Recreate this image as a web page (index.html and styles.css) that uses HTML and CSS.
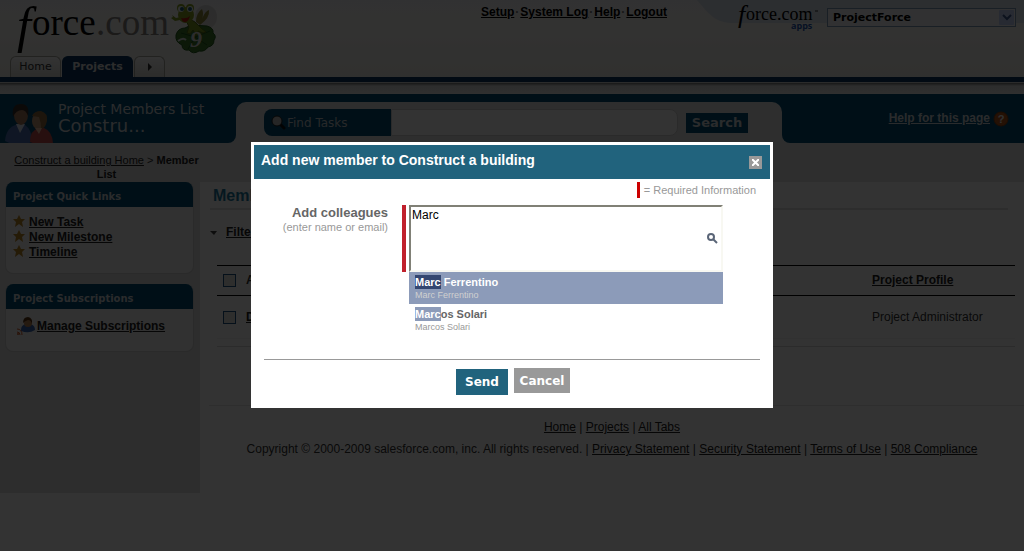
FILE: index.html
```html
<!DOCTYPE html>
<html lang="en">
<head>
<meta charset="utf-8">
<title>Project Members List</title>
<link rel="stylesheet" href="styles.css">
</head>
<body>
<header class="top">
  <div class="top-row">
    <svg class="logo" width="224" height="56" viewBox="0 0 224 56" role="img" aria-label="force.com">
      <text class="logo-f" x="17" y="42">f</text>
      <text class="logo-word" x="32" y="35">orce</text>
      <text class="logo-com" x="96" y="35">.com</text>
      <ellipse cx="206" cy="17" rx="11" ry="12" fill="#c4c4c4" opacity=".5"/>
      <path d="M176 35q2-7 9-7l6-3 16 1q7 2 6 7 4 3 1 7 0 6-6 7-3 5-9 4-6 4-10-1-7 1-7-5-7-3-6-10z" fill="#3c7a2c" stroke="#20561a"/>
      <path d="M195 37l-14-4M195 37l15-6M195 37l-7 12M195 37l12 8" stroke="#20561a" fill="none"/>
      <path d="M196 22q0-9 6-13 2 5 0 10 3-8 7-9 1 8-9 15z" fill="#8a8638"/>
      <path d="M186 20q7-1 11 4l4 4 5 4-3 1-5-2 1 5-3-1-3-5-3 4-3-1 2-6z" fill="#7f9a22" stroke="#4f6a12"/>
      <path d="M180 20l-5 1-4-3 2-1-1-2 4 3 5-1z" fill="#7f9a22"/>
      <ellipse cx="186" cy="15" rx="8" ry="8" fill="#86a022"/>
      <circle cx="181" cy="8" r="4" fill="#86a022"/><circle cx="190" cy="8" r="4" fill="#86a022"/>
      <path d="M181 18q6 1 9-2-2 7-6 6-2-1-3-4z" fill="#b82010"/>
      <circle cx="181" cy="9" r="3" fill="#e8f0f0"/><circle cx="190" cy="9" r="3" fill="#e8f0f0"/>
      <circle cx="182" cy="9" r="2" fill="#205d78"/><circle cx="190" cy="9" r="2" fill="#205d78"/>
      <text class="logo-nine" x="190" y="47">9</text>
      <path d="M178 41q5-4 8-1" stroke="#ddd" stroke-width="2" fill="none"/>
    </svg>
    <nav class="user-nav"><a href="#">Setup</a><i>·</i><a href="#">System Log</a><i>·</i><a href="#">Help</a><i>·</i><a href="#">Logout</a></nav>
    <div class="apps">
      <svg class="swoosh" height="24" width="327" viewBox="0 0 327 24" preserveAspectRatio="none" aria-hidden="true">
        <path d="M0 0C13 15 18 23 38 23H327V0z" fill="#dce4ee"/>
      </svg>
      <svg class="apps-logo" width="86" height="33" viewBox="0 0 86 33" role="img" aria-label="force.com apps">
        <text class="apps-f" x="5" y="23">f</text>
        <text class="apps-word" x="13" y="20">orce.com</text>
        <text class="apps-sub" x="58" y="29">apps</text>
        <path d="M82 11h3" stroke="#333"/>
      </svg>
      <span class="app-picker">
        <select aria-label="Application"><option>ProjectForce</option></select>
        <svg class="chevron" width="15" height="15" viewBox="0 0 15 15" aria-hidden="true"><rect width="15" height="15" rx="1" fill="#c2d2fb"/><path d="M4 5l4 4 4-4" fill="none" stroke="#3d5a90" stroke-width="2"/></svg>
      </span>
    </div>
  </div>
  <nav class="tabs">
    <a href="#" class="tab">Home</a>
    <a href="#" class="tab tab-on">Projects</a>
    <a href="#" class="tab tab-more" aria-label="More tabs"><svg width="6" height="8" viewBox="0 0 6 8"><path d="M1 0l4 4-4 4z" fill="#333"/></svg></a>
  </nav>
</header>
<div class="rule"></div>

<section class="band">
  <div class="band-title">
    <svg width="50" height="44" viewBox="0 0 50 44" aria-hidden="true">
      <path d="M0 38q1-14 13-17l7 1q6 4 8 16-13 8-28 0z" fill="#4a6fb5"/>
      <path d="M11 21l4 9 5-9z" fill="#dbe5f5"/>
      <ellipse cx="16" cy="12" rx="7" ry="10" fill="#a3785a"/>
      <path d="M8 14Q6 1 16 1q9 0 7 12-2-6-6-6-6 0-9 7z" fill="#3a302a"/>
      <path d="M25 39q0-12 9-14h5q8 3 9 15-12 5-23-1z" fill="#c04a4a"/>
      <ellipse cx="33" cy="18" rx="6" ry="8" fill="#c49a78"/>
      <path d="M27 13q2-5 9-5 7 2 6 10-2 8-6 8 0-7-2-12z" fill="#8f6c3c"/>
      <path d="M30 25l4 6 3-6z" fill="#eebfa2"/>
    </svg>
    <h1><span>Project Members List</span>Constru...</h1>
  </div>
  <div class="band-search">
    <form class="search">
      <label for="find"><svg width="15" height="15" viewBox="0 0 15 15" aria-hidden="true"><path d="M9 9l4 4" stroke="#101010" stroke-width="3" stroke-linecap="round"/><circle cx="6" cy="6" r="5" fill="#bfbfbf" stroke="#222"/></svg>Find Tasks</label>
      <input id="find" type="text">
      <button type="button">Search</button>
    </form>
  </div>
  <div class="band-help">
    <a href="#">Help for this page</a>
    <svg width="16" height="16" viewBox="0 0 16 16" aria-hidden="true"><circle cx="8" cy="8" r="7" fill="#b5541c" stroke="#8a3d10"/><text class="q" x="8" y="12">?</text></svg>
  </div>
</section>

<div class="columns">
  <aside class="side">
    <p class="crumbs"><a href="#">Construct a building Home</a> &gt; <b>Member List</b></p>
    <section class="box">
      <h2>Project Quick Links</h2>
      <ul class="quick">
        <li><svg width="12" height="12" viewBox="0 0 12 12" aria-hidden="true"><path d="M6 0l2 4 4 0-3 3 1 5-4-3-4 3 1-5-3-3h4z" fill="#b98524"/></svg><a href="#">New Task</a></li>
        <li><svg width="12" height="12" viewBox="0 0 12 12" aria-hidden="true"><path d="M6 0l2 4 4 0-3 3 1 5-4-3-4 3 1-5-3-3h4z" fill="#b98524"/></svg><a href="#">New Milestone</a></li>
        <li><svg width="12" height="12" viewBox="0 0 12 12" aria-hidden="true"><path d="M6 0l2 4 4 0-3 3 1 5-4-3-4 3 1-5-3-3h4z" fill="#b98524"/></svg><a href="#">Timeline</a></li>
      </ul>
    </section>
    <section class="box">
      <h2>Project Subscriptions</h2>
      <p class="subs"><svg width="19" height="19" viewBox="0 0 19 19" aria-hidden="true"><path d="M5 13q0-5 5-6h4q5 1 5 6-6 4-14 1z" fill="#3966b0"/><circle cx="12" cy="6" r="4" fill="#b98052"/><path d="M7 6q0-6 5-6 5 1 4 7-1-4-4-4-3 1-5 3z" fill="#5c3511"/><path d="M1 12q5 0 5 6M1 15q3 0 3 3" stroke="#cf5b2b" fill="none"/><circle cx="2" cy="17" r="1" fill="#cf5b2b"/></svg><a href="#">Manage Subscriptions</a></p>
    </section>
  </aside>
  <main class="main">
    <div class="panel">
      <h2 class="heading">Members</h2>
      <p class="filter"><svg width="7" height="4" viewBox="0 0 7 4" aria-hidden="true"><path d="M0 0h7L4 4z" fill="#444"/></svg><a href="#">Filter</a></p>
      <table class="members">
        <thead><tr><th class="c-box"><input type="checkbox" aria-label="Select all"></th><th>Action</th><th class="c-profile"><a href="#">Project Profile</a></th></tr></thead>
        <tbody><tr><td class="c-box"><input type="checkbox" aria-label="Select member"></td><td><a href="#"><b>Del</b></a></td><td>Project Administrator</td></tr></tbody>
      </table>
      <div class="end"></div>
    </div>
    <footer class="foot">
      <p><a href="#">Home</a> | <a href="#">Projects</a> | <a href="#">All Tabs</a></p>
      <p>Copyright © 2000-2009 salesforce.com, inc. All rights reserved. | <a href="#">Privacy Statement</a> | <a href="#">Security Statement</a> | <a href="#">Terms of Use</a> | <a href="#">508 Compliance</a></p>
    </footer>
  </main>
</div>

<div class="shade">
  <div class="dialog" role="dialog" aria-labelledby="dlg-title">
    <div class="dlg-head">
      <h2 id="dlg-title">Add new member to Construct a building</h2>
      <button type="button" class="close" aria-label="Close"><svg width="7" height="7" viewBox="0 0 7 7"><path d="M0 0l7 7M7 0L0 7" stroke="#fff" stroke-width="2"/></svg></button>
    </div>
    <p class="required"><span></span>= Required Information</p>
    <div class="field">
      <label for="colleagues"><b>Add colleagues</b><small>(enter name or email)</small></label>
      <div class="control">
        <div class="entry">
          <textarea id="colleagues">Marc</textarea>
          <svg class="lens" width="11" height="11" viewBox="0 0 11 11" aria-hidden="true"><circle cx="4" cy="4" r="3" fill="#fff" stroke="#5a6577" stroke-width="2"/><path d="M6 6l4 4" stroke="#5a6577" stroke-width="2"/></svg>
        </div>
        <ul class="matches">
          <li class="picked"><b><mark>Marc</mark> Ferrentino</b><small>Marc Ferrentino</small></li>
          <li><b><mark>Marc</mark>os Solari</b><small>Marcos Solari</small></li>
        </ul>
      </div>
    </div>
    <div class="actions">
      <button type="button" class="send">Send</button>
      <button type="button" class="cancel">Cancel</button>
    </div>
  </div>
</div>
</body>
</html>
```

FILE: styles.css
```css
* { box-sizing: border-box; }
body { margin: 0; background: #fff; color: #333; font: 12px/15px "Liberation Sans", Arial, sans-serif; min-height: 100vh; }
h1, h2, p, ul { margin: 0; padding: 0; font-weight: normal; }
ul { list-style: none; }
a { color: #222; }
svg { flex: none; display: block; }
button, input, select, textarea { font: inherit; margin: 0; border-radius: 0; }

.top { background: linear-gradient(#f6f6f8, #f9f8f4 40%, #f1f0ea); }
.top-row { display: flex; align-items: flex-start; height: 56px; }
.logo { overflow: visible; }
.logo text { font-family: "Liberation Serif", serif; }
.logo .logo-f { font-size: 50px; font-style: italic; fill: #000; }
.logo .logo-word { font-size: 37px; fill: #000; }
.logo .logo-com { font-size: 37px; fill: #85827f; }
.logo .logo-nine { font-size: 24px; font-style: italic; font-weight: bold; fill: #ddd; }
.user-nav { margin: 5px 30px 0 auto; display: flex; gap: 1px; font-weight: bold; }
.user-nav a { color: #000; }
.user-nav i { color: #777; font-style: normal; }
.apps { width: 327px; position: relative; display: flex; justify-content: flex-end; gap: 8px; padding-right: 8px; }
.swoosh { position: absolute; left: 0; top: 0; width: 100%; }
.apps-logo { position: relative; }
.apps-logo text { font-family: "Liberation Serif", serif; fill: #000; }
.apps-logo .apps-f { font-size: 26px; font-style: italic; }
.apps-logo .apps-word { font-size: 18px; }
.apps-logo .apps-sub { font: bold 9px "Open Sans", sans-serif; fill: #1e58b5; }
.app-picker { position: relative; width: 189px; height: 19px; margin-top: 8px; }
.app-picker select { appearance: none; width: 100%; height: 19px; padding: 0 5px; border: 1px solid #7f9db9; background: #f4f6f9; color: #000; font: bold 11px/16px "DejaVu Sans", Verdana, sans-serif; }
.chevron { position: absolute; right: 2px; top: 2px; }

.tabs { display: flex; gap: 1px; padding-left: 10px; height: 21px; }
.tab { display: flex; align-items: center; justify-content: center; width: 51px; border: 1px solid #a9a9a0; border-bottom: 0; border-radius: 6px 6px 0 0; background: linear-gradient(#fff, #dcdcd6); color: #333; font: 11px/14px "DejaVu Sans", Verdana, sans-serif; text-decoration: none; }
.tab-on { width: 71px; background: #0a3560; border-color: #0a3560; color: #ddd; font-weight: bold; }
.tab-more { width: 31px; }
.rule { height: 17px; border-top: 5px solid #0a3560; background: linear-gradient(#d5d5d5 1px, #777 1px, #ddd 4px, #efefef); }

.band { display: flex; background: #e6e6e6; height: 49px; }
.band-title { display: flex; align-items: flex-end; gap: 3px; width: 236px; padding-left: 5px; background: #004c74; border-bottom-right-radius: 8px; }
.band-title svg { margin-bottom: -4px; }
.band-title h1 { align-self: flex-start; padding-top: 7px; color: #d0d6da; font: 18px/18px "DejaVu Sans", Verdana, sans-serif; }
.band-title h1 span { display: block; font-size: 14px; line-height: 16px; }
.band-search { flex: 1; padding-top: 8px; background: #004c74; }
.search { display: flex; align-items: center; height: 100%; padding: 0 34px 0 28px; border-radius: 10px 10px 0 0; background: #e6e6e6; }
.search label { display: flex; align-items: center; gap: 1px; width: 127px; height: 27px; padding-left: 7px; border-radius: 8px 0 0 8px; background: #004c74; color: #c0c8cc; font: 12px/14px "DejaVu Sans", Verdana, sans-serif; }
.search input { flex: 1; min-width: 0; height: 27px; border: 1px solid #d2d2d2; border-radius: 0 8px 8px 0; background: #fff; }
.search button { width: 62px; height: 20px; margin-left: 8px; padding: 0; border: 0; background: #004c74; color: #d0d6da; font: bold 13px/20px "DejaVu Sans", Verdana, sans-serif; }
.band-help { display: flex; align-items: center; justify-content: flex-end; gap: 3px; width: 242px; padding-right: 15px; background: #004c74; border-bottom-left-radius: 8px; font-weight: bold; }
.band-help a { color: #d0d6da; }
.q { font: bold 11px "Liberation Sans", sans-serif; text-anchor: middle; fill: #eee; }

.columns { display: flex; align-items: flex-start; }
.side { width: 200px; padding: 10px 6px 141px 5px; background: #dedede; }
.crumbs { margin-right: -6px; padding: 0 0 1px 8px; font-size: 11px; line-height: 14px; text-align: center; }
.crumbs b { color: #222; }
.box { border: 1px solid #cfcfcf; border-top: 0; border-radius: 8px; background: #f2f2f2; overflow: hidden; }
.box + .box { margin-top: 10px; }
.box h2 { padding: 8px 7px; height: 25px; background: #004c74; color: #d0d6da; font: bold 10px/14px "DejaVu Sans", Verdana, sans-serif; }
.box a, .filter a { font-weight: bold; }
.quick { padding: 8px 7px 13px; }
.quick li { display: flex; gap: 4px; }
.subs { display: flex; align-items: center; gap: 2px; padding: 8px 10px 15px; }
.main { flex: 1; min-width: 0; border-top: 39px solid #e6e6e6; }
.panel { padding: 5px 9px 58px 10px; }
.heading { margin-right: 7px; padding-left: 3px; height: 23px; border-bottom: 2px solid #e0e0e0; color: #1c7b9e; font-size: 16px; font-weight: bold; line-height: 18px; }
.filter { display: flex; align-items: center; gap: 9px; padding: 15px 0 25px; }
.members { width: calc(100% - 7px); margin-left: 7px; border-collapse: collapse; table-layout: fixed; }
.members th, .members td { padding: 0; text-align: left; }
.members th { height: 30px; border: solid #000; border-width: 1px 0; }
.members td { height: 43px; border-bottom: 1px solid #f6f6f6; }
.members .c-box { width: 29px; padding-left: 6px; }
.members .c-profile { width: 143px; }
.members input { appearance: none; display: block; width: 13px; height: 13px; border: 1px solid #1c5180; background: #e4e4e0; }
.end { margin-left: 7px; height: 8px; border-bottom: 1px solid #d6d6d6; }
.foot { margin-left: 9px; padding-top: 14px; border-top: 1px solid #e4e4e4; text-align: center; }
.foot p { margin: 0 9px 7px 0; }

.shade { position: fixed; inset: 0; display: flex; justify-content: center; align-items: flex-start; padding-top: 142px; background: rgba(0, 0, 0, .8); }
.dialog { width: 522px; max-width: 100%; padding: 3px 3px 13px; background: #fff; color: #666; }
.dlg-head { display: flex; align-items: center; justify-content: space-between; height: 34px; padding: 0 8px 0 7px; background: #21637d; }
.dlg-head h2 { padding-bottom: 4px; color: #fff; font-size: 14px; font-weight: bold; line-height: 16px; }
.close { display: grid; place-items: center; width: 13px; height: 13px; padding: 0; border: 0; background: #999; }
.required { display: flex; justify-content: flex-end; align-items: center; gap: 4px; padding: 3px 14px 7px 0; color: #999; font-size: 11px; line-height: 16px; }
.required span { width: 3px; height: 16px; background: #c00; }
.field { display: flex; padding: 0 47px 0 10px; }
.field label { width: 124px; text-align: right; }
.field label b { display: block; font-size: 13px; line-height: 16px; }
.field label small { display: block; color: #999; font-size: 11px; line-height: 12px; }
.control { flex: 1; margin-left: 14px; }
.entry { position: relative; padding-left: 3px; border-left: 4px solid #c0202c; }
.entry textarea { display: block; width: 100%; height: 67px; padding: 1px; resize: none; border: 2px solid #808076; border-right-color: #f8f8f2; border-bottom-color: #f8f8f2; outline: 0; background: #fff; color: #000; }
.lens { position: absolute; right: 5px; top: 28px; }
.matches { margin-left: 7px; }
.matches li { height: 32px; padding: 3px 6px; }
.matches b, .matches small { display: block; }
.matches b { font-size: 11px; line-height: 14px; }
.matches small { color: #999; font-size: 9px; line-height: 12px; }
.matches mark { display: inline-block; background: #8c9bb9; color: #fff; }
.matches .picked { background: #8c9bb9; color: #fff; }
.matches .picked small { color: #d0d0d0; }
.matches .picked mark { background: #334670; }
.actions { display: flex; justify-content: center; gap: 6px; margin: 23px 10px 0; padding: 8px 0 0 2px; border-top: 1px solid #999; }
.actions button { height: 26px; padding: 0; border: 0; color: #fff; font: bold 12px/26px "DejaVu Sans", Verdana, sans-serif; }
.actions .send { width: 52px; margin-top: 1px; background: #21637d; }
.actions .cancel { width: 56px; height: 25px; background: #999; }
```
